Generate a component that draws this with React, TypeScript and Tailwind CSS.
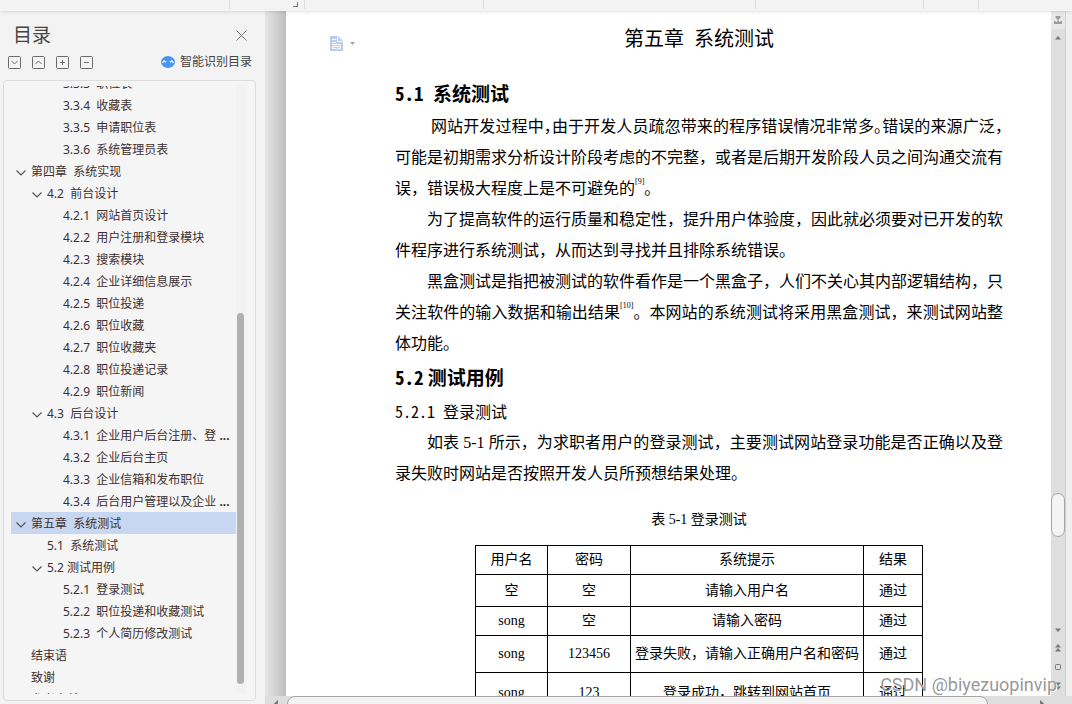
import React from 'react';

interface TocItem {
  level: 1 | 2 | 3;
  text: string;
  open?: boolean;
  active?: boolean;
  more?: boolean;
}

const tocItems: TocItem[] = [
  { level: 3, text: '3.3.3  职位表' },
  { level: 3, text: '3.3.4  收藏表' },
  { level: 3, text: '3.3.5  申请职位表' },
  { level: 3, text: '3.3.6  系统管理员表' },
  { level: 1, text: '第四章  系统实现', open: true },
  { level: 2, text: '4.2  前台设计', open: true },
  { level: 3, text: '4.2.1  网站首页设计' },
  { level: 3, text: '4.2.2  用户注册和登录模块' },
  { level: 3, text: '4.2.3  搜索模块' },
  { level: 3, text: '4.2.4  企业详细信息展示' },
  { level: 3, text: '4.2.5  职位投递' },
  { level: 3, text: '4.2.6  职位收藏' },
  { level: 3, text: '4.2.7  职位收藏夹' },
  { level: 3, text: '4.2.8  职位投递记录' },
  { level: 3, text: '4.2.9  职位新闻' },
  { level: 2, text: '4.3  后台设计', open: true },
  { level: 3, text: '4.3.1  企业用户后台注册、登', more: true },
  { level: 3, text: '4.3.2  企业后台主页' },
  { level: 3, text: '4.3.3  企业信箱和发布职位' },
  { level: 3, text: '4.3.4  后台用户管理以及企业', more: true },
  { level: 1, text: '第五章  系统测试', open: true, active: true },
  { level: 2, text: '5.1  系统测试' },
  { level: 2, text: '5.2 测试用例', open: true },
  { level: 3, text: '5.2.1  登录测试' },
  { level: 3, text: '5.2.2  职位投递和收藏测试' },
  { level: 3, text: '5.2.3  个人简历修改测试' },
  { level: 1, text: '结束语' },
  { level: 1, text: '致谢' },
  { level: 1, text: '参考文献' },
];

const indent = { 1: 'pl-1', 2: 'pl-5', 3: 'pl-9' };

const testCases = [
  { user: '空', password: '空', tip: '请输入用户名', result: '通过', height: 'h-8' },
  { user: 'song', password: '空', tip: '请输入密码', result: '通过', height: 'h-[29px]' },
  { user: 'song', password: '123456', tip: '登录失败，请输入正确用户名和密码', result: '通过', height: 'h-[37px]' },
  { user: 'song', password: '123', tip: '登录成功，跳转到网站首页', result: '通过', height: 'h-10' },
];

const treeButtons = [
  { label: '展开', d: 'M3.5 5 L6.5 8 L9.5 5' },
  { label: '收起', d: 'M3.5 8 L6.5 5 L9.5 8' },
  { label: '增加级别', d: 'M4 6.5 H9 M6.5 4 V9' },
  { label: '减少级别', d: 'M4 6.5 H9' },
];

const TopBar: React.FC = () => {
  const cell = 'h-[9px] border-r border-[#dcdcdc]';
  return (
    <header className="relative z-10 flex h-[11px] shrink-0 bg-[#f3f3f3] shadow-[0_1px_3px_rgba(0,0,0,0.12)]">
      <div className={`w-[230px] ${cell}`} />
      <div className={`flex w-[75px] justify-end pr-1.5 pt-0.5 ${cell}`}>
        <svg width="5" height="5" viewBox="0 0 5 5" fill="none" stroke="#777" shapeRendering="crispEdges">
          <path d="M4.5 0 V4.5 H0" />
        </svg>
      </div>
      <div className={`w-[179px] ${cell}`} />
      <div className={`w-[272px] ${cell}`} />
      <div className={`w-[168px] ${cell}`} />
      <div className={`w-[55px] ${cell}`} />
    </header>
  );
};

const Sidebar: React.FC = () => {
  return (
    <aside className="flex w-[265px] shrink-0 flex-col bg-[#f3f3f3] pb-[3px] pl-[3px] pr-[9px] pt-3 text-[#3c3c3c]">
      {/* Tiêu đề mục lục */}
      <div className="flex h-6 items-center justify-between pl-2.5 pr-[9px]">
        <h2 className="text-[19px] leading-6 text-[#444]">目录</h2>
        <button type="button" aria-label="关闭">
          <svg width="11" height="11" viewBox="0 0 11 11" fill="none" stroke="#777">
            <path d="M0.5 0.5 L10.5 10.5 M10.5 0.5 L0.5 10.5" />
          </svg>
        </button>
      </div>

      {/* Thanh công cụ */}
      <div className="mt-2 flex h-3.5 items-center justify-between pl-[5px] pr-1">
        <div className="flex gap-[11px]">
          {treeButtons.map((button) => (
            <button key={button.label} type="button" aria-label={button.label}>
              <svg width="13" height="13" viewBox="0 0 13 13" fill="none" stroke="#6b6b6b">
                <rect x="0.5" y="0.5" width="12" height="12" rx="1" />
                <path d={button.d} />
              </svg>
            </button>
          ))}
        </div>
        <button type="button" className="flex items-center gap-[5px] text-xs leading-4 text-[#444]">
          <svg width="14" height="12" viewBox="0 0 14 12">
            <ellipse cx="7" cy="6" rx="7" ry="6" fill="#4a96f0" />
            <path d="M1.5 6.8 L3 4.8 L5 6.3 M9 6.3 L11 4.8 L12.5 6.8" fill="none" stroke="#fff" strokeWidth="1.2" />
          </svg>
          智能识别目录
        </button>
      </div>

      {/* Danh sách chương */}
      <div className="mt-[11px] flex min-h-0 flex-1 rounded border border-[#dcdcdc] bg-[#f5f5f5] pb-1.5 pl-[7px] pr-[9px] pt-[5px]">
        <nav className="min-w-0 flex-1 overflow-hidden">
          <ul className="-mt-3.5">
            {tocItems.map((item) => (
              <li key={item.text}>
                <a
                  href="#"
                  className={`flex h-[22px] items-center whitespace-pre pt-0.5 text-xs text-[#3d3030] ${indent[item.level]} ${
                    item.active ? 'bg-[#c7d7f1]' : ''
                  }`}
                >
                  <span className="flex w-4 shrink-0 pt-0.5">
                    {item.open && (
                      <svg width="12" height="8" viewBox="0 0 12 8" fill="none" stroke="#555" strokeWidth="1.2">
                        <path d="M1.5 1.5 L6 6 L10.5 1.5" />
                      </svg>
                    )}
                  </span>
                  {item.text}
                  {item.more && <span className="font-bold"> ...</span>}
                </a>
              </li>
            ))}
          </ul>
        </nav>
        <div className="flex w-[10px] flex-col bg-[#f2f2f2]">
          <div className="grow-[227]" />
          <div className="ml-px w-[7px] grow-[371] rounded-full bg-[#b0b0b1]" />
          <div className="grow-[10]" />
        </div>
      </div>
    </aside>
  );
};

const DocumentPage: React.FC = () => {
  const body = 'text-justify text-base leading-[31px]';
  const heading = "font-['Noto_Sans_CJK_SC',sans-serif]";
  const halfWidth = "[font-feature-settings:'hwid']";
  const halfMark = "[font-feature-settings:'halt']";
  const sup = 'align-super text-[8px] leading-none';
  const cell = 'border border-black p-0 text-center font-normal';
  return (
    <main className="relative min-w-0 flex-1 overflow-hidden bg-white pl-[109px] pr-12 pt-[9px] font-['Liberation_Serif','Noto_Sans_CJK_SC',serif] text-black">
      {/* Nút tùy chọn đoạn văn nằm ở lề trang */}
      <button type="button" aria-label="段落选项" className="absolute left-11 top-[25px] flex items-center gap-[7px]">
        <svg width="13" height="15" viewBox="0 0 13 15">
          <path d="M0 0 H8 L13 5 V15 H0 Z" fill="#b9cdeb" />
          <path d="M7.5 1 V5.5 H12.5 M2 3.5 H6 M2 6.5 H6 M2 8.5 H11" fill="none" stroke="#fff" />
          <path d="M2.5 10.5 H10.5 V12.5 H7.5 L6.5 13.5 L5.5 12.5 H2.5 Z" fill="none" stroke="#fff" />
        </svg>
        <svg width="5" height="3" viewBox="0 0 5 3">
          <path d="M0 0 H5 L2.5 3 Z" fill="#a5a5a5" />
        </svg>
      </button>

      <h1 className={`mb-[19px] text-center text-xl leading-9 ${heading} ${halfWidth}`}>第五章 系统测试</h1>

      <h2 className={`h-9 text-[19px] font-bold leading-9 ${heading} ${halfWidth}`}>5.1 系统测试</h2>
      <p className={`indent-9 ${body}`}>
        网站开发过程中<span className={halfMark}>，</span>
        由于开发人员疏忽带来的程序错误情况非常多<span className={halfMark}>。</span>
        错误的来源广泛<span className={halfMark}>，</span>
        可能是初期需求分析设计阶段考虑的不完整，或者是后期开发阶段人员之间沟通交流有误，错误极大程度上是不可避免的<sup className={sup}>[9]</sup>。
      </p>
      <p className={`indent-8 ${body}`}>
        为了提高软件的运行质量和稳定性，提升用户体验度，因此就必须要对已开发的软件程序进行系统测试，从而达到寻找并且排除系统错误。
      </p>
      <p className={`indent-8 ${body}`}>
        黑盒测试是指把被测试的软件看作是一个黑盒子，人们不关心其内部逻辑结构，只关注软件的输入数据和输出结果<sup className={sup}>[10]</sup>。本网站的系统测试将采用黑盒测试，来测试网站整体功能。
      </p>

      <h2 className={`h-9 text-[19px] font-bold leading-9 ${heading}`}>
        <span className={halfWidth}>5.2</span> 测试用例
      </h2>
      <h3 className={`h-8 text-base leading-8 ${heading} ${halfWidth}`}>5.2.1 登录测试</h3>
      <p className={`indent-8 ${body}`}>
        如表 5-1 所示，为求职者用户的登录测试，主要测试网站登录功能是否正确以及登录失败时网站是否按照开发人员所预想结果处理。
      </p>

      {/* Bảng kiểm thử đăng nhập */}
      <table className="mx-auto mt-[15px] table-fixed border-collapse text-sm">
        <caption className="pb-2.5 text-sm leading-[31px]">表 5-1 登录测试</caption>
        <colgroup>
          <col className="w-[72px]" />
          <col className="w-[83px]" />
          <col className="w-[233px]" />
          <col className="w-[59px]" />
        </colgroup>
        <thead>
          <tr className="h-[29px]">
            <th className={cell}>用户名</th>
            <th className={cell}>密码</th>
            <th className={cell}>系统提示</th>
            <th className={cell}>结果</th>
          </tr>
        </thead>
        <tbody>
          {testCases.map((row) => (
            <tr key={row.tip} className={row.height}>
              <td className={cell}>{row.user}</td>
              <td className={cell}>{row.password}</td>
              <td className={cell}>{row.tip}</td>
              <td className={cell}>{row.result}</td>
            </tr>
          ))}
        </tbody>
      </table>
    </main>
  );
};

const VerticalScrollbar: React.FC = () => {
  return (
    <div className="flex w-[15px] shrink-0 flex-col items-center border-r border-[#d0d0d0] bg-[#dedede]">
      <button type="button" aria-label="标尺" className="flex h-[18px] w-full items-center justify-center bg-[#e8e8e8]">
        <svg width="8" height="8" viewBox="0 0 8 8" fill="#9a9a9a">
          <path d="M1.5 0 H6.5 V1.5 L4.5 3.5 V5 H3.5 V3.5 L1.5 1.5 Z M0 5 H1.5 V6 H3 V5 H5 V6 H6.5 V5 H8 V8 H0 Z" />
        </svg>
      </button>
      <button type="button" aria-label="向上滚动" className="mt-[7px]">
        <svg width="6" height="4" viewBox="0 0 6 4" fill="#777">
          <path d="M3 0 L6 3.5 H0 Z" />
        </svg>
      </button>
      <div className="flex w-full flex-1 flex-col">
        <div className="grow-[453]" />
        <div className="h-11 rounded-full border border-[#a6a6a6] bg-[#f4f4f4]" />
        <div className="grow-[91]" />
      </div>
      <div className="flex flex-col items-center gap-3 pb-1.5">
        <button type="button" aria-label="向下滚动">
          <svg width="6" height="4" viewBox="0 0 6 4" fill="#777">
            <path d="M0 0.5 H6 L3 4 Z" />
          </svg>
        </button>
        <button type="button" aria-label="上一页">
          <svg width="6" height="8" viewBox="0 0 6 8" fill="#777">
            <path d="M3 0 L6 3.5 H0 Z M3 4 L6 7.5 H0 Z" />
          </svg>
        </button>
        <button type="button" aria-label="选择浏览对象">
          <svg width="6" height="6" viewBox="0 0 6 6" fill="none" stroke="#777">
            <rect x="0.5" y="0.5" width="5" height="5" rx="1" />
          </svg>
        </button>
        <button type="button" aria-label="下一页">
          <svg width="6" height="8" viewBox="0 0 6 8" fill="#777">
            <path d="M0 0.5 H6 L3 4 Z M0 4.5 H6 L3 8 Z" />
          </svg>
        </button>
      </div>
    </div>
  );
};

const HorizontalScrollbar: React.FC = () => {
  return (
    <div className="flex h-2 shrink-0 justify-between overflow-hidden bg-[#dedede]">
      <div className="flex w-[22px] shrink-0 items-start justify-center pt-1">
        <svg width="4" height="7" viewBox="0 0 4 7" fill="#777">
          <path d="M4 0 V7 L0 3.5 Z" />
        </svg>
      </div>
      <div className="h-3.5 flex-1 rounded-t-lg border border-[#a6a6a6] bg-[#f3f3f3]" />
      <div className="flex w-[84px] shrink-0 justify-end pr-7 pt-1">
        <svg width="4" height="7" viewBox="0 0 4 7" fill="#777">
          <path d="M0 0 V7 L4 3.5 Z" />
        </svg>
      </div>
    </div>
  );
};

const App: React.FC = () => {
  return (
    <div className="relative flex h-screen flex-col overflow-hidden bg-[#efefef] font-['Noto_Sans','Noto_Sans_CJK_SC',sans-serif]">
      <TopBar />
      <div className="flex min-h-0 flex-1">
        <Sidebar />
        <div className="flex min-w-0 flex-1 flex-col">
          <div className="flex min-h-0 flex-1">
            <div className="w-[21px] shrink-0 bg-linear-to-r from-[#e6e6e6] to-[#bfbfbf]" />
            <DocumentPage />
            <VerticalScrollbar />
            <div className="w-1.5 shrink-0" />
          </div>
          <HorizontalScrollbar />
        </div>
      </div>
      <span className="pointer-events-none absolute bottom-[7px] right-[15px] font-['Roboto',sans-serif] text-lg leading-6 text-[#8c8c8c]/90 [text-shadow:1px_1px_0_#fff]">
        CSDN @biyezuopinvip
      </span>
    </div>
  );
};

export default App;
